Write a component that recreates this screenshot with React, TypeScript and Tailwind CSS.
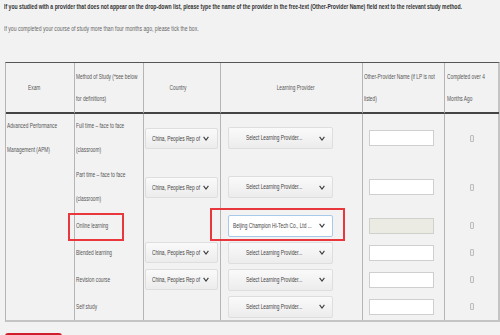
import React from "react";

const T = ({ children, c = "origin-left" }: { children: React.ReactNode; c?: string }) => (
  <span className={`inline-block whitespace-nowrap scale-x-[0.6] ${c}`}>{children}</span>
);

const P = ({ children }: { children: React.ReactNode }) => (
  <span className="inline-block origin-left scale-x-[0.64] whitespace-nowrap">{children}</span>
);

const Chevron = () => (
  <svg width="6" height="5" viewBox="0 0 6 5" className="shrink-0">
    <path d="M0.6 0.9 L3 4 L5.4 0.9" stroke="#3a3a3a" strokeWidth="1.1" fill="none" />
  </svg>
);

function CountrySel() {
  return (
    <div className="ml-px flex h-[21px] w-[73px] items-center rounded-[2px] border border-[#dedede] bg-gradient-to-b from-[#fafafa] to-[#ececec] pl-[6px] pr-[8px] text-[#444]">
      <div className="min-w-0 flex-1 leading-[19px]">
        <T>China, Peoples Rep of</T>
      </div>
      <Chevron />
    </div>
  );
}

function LPSel({ text = "Select Learning Provider...", focus = false }: { text?: string; focus?: boolean }) {
  return (
    <div
      className={
        focus
          ? "ml-[7px] flex h-[22px] w-[105px] items-center rounded-[2px] border border-[#a9c9ea] bg-white pl-[4px] pr-[7px] text-[#444]"
          : "ml-[7px] flex h-[22px] w-[105px] items-center rounded-[2px] border border-[#dedede] bg-gradient-to-b from-[#fafafa] to-[#ececec] pl-[17px] pr-[7px] text-[#444]"
      }
    >
      <div className="min-w-0 flex-1 leading-[20px]">
        <T>{text}</T>
      </div>
      <Chevron />
    </div>
  );
}

function Inp({ disabled = false }: { disabled?: boolean }) {
  return (
    <div
      className={
        disabled
          ? "ml-[6px] h-[16px] w-[65px] border border-[#d0d0cc] bg-[#ebebe4]"
          : "ml-[6px] h-[16px] w-[65px] border border-[#cfcfcf] bg-white"
      }
    />
  );
}

function Check() {
  return (
    <div className="flex h-full items-center justify-center">
      <div className="h-[7px] w-[4px] rounded-[1px] border border-[#bdbdbd] bg-[#ececec]" />
    </div>
  );
}

const cellR = "border-r border-[#b5b5b5]";

type Row = { method: string[]; country: boolean; lp: "sel" | "focus"; disabled?: boolean };

const rows: Row[] = [
  { method: ["Full time – face to face", "(classroom)"], country: true, lp: "sel" },
  { method: ["Part time – face to face", "(classroom)"], country: true, lp: "sel" },
  { method: ["Online learning"], country: false, lp: "focus", disabled: true },
  { method: ["Blended learning"], country: true, lp: "sel" },
  { method: ["Revision course"], country: true, lp: "sel" },
  { method: ["Self study"], country: false, lp: "sel" },
];

export default function App() {
  return (
    <div className="relative h-[335px] w-[500px] overflow-hidden bg-[#f2f2f2] font-['Liberation_Sans',Arial,sans-serif] text-[8px] text-[#555]">
      <div className="pl-[4px] leading-[14px] font-bold text-[#333]">
        <P>
          If you studied with a provider that does not appear on the drop-down list, please type the name of the provider in the free-text (Other-Provider Name) field next to the relevant study method.
        </P>
      </div>
      <div className="mt-[8px] pl-[4px] leading-[14px] text-[#666]">
        <P>If you completed your course of study more than four months ago, please tick the box.</P>
      </div>

      <div className="ml-[5px] mt-[26px] w-[495px] border-t border-l border-r-2 border-b-2 border-t-[#555] border-l-[#b5b5b5] border-r-[#c4c4c4] border-b-[#c4c4c4]">
        <div className="grid grid-cols-[69px_69px_77px_142px_82px_54px] grid-rows-[51px_48px_50px_27px_27px_27px_27px]">
          {/* header */}
          <div className={`${cellR} flex items-center justify-center border-b-2 border-b-[#444] pr-[12px]`}>
            <T c="origin-center">Exam</T>
          </div>
          <div className={`${cellR} flex flex-col justify-center border-b-2 border-b-[#444] pl-px leading-[22px]`}>
            <T>Method of Study (*see below</T>
            <T>for definitions)</T>
          </div>
          <div className={`${cellR} flex items-center justify-center border-b-2 border-b-[#444] pr-[8px]`}>
            <T c="origin-center">Country</T>
          </div>
          <div className={`${cellR} flex items-center justify-center border-b-2 border-b-[#444] pl-[8px]`}>
            <T c="origin-center">Learning Provider</T>
          </div>
          <div className={`${cellR} flex flex-col justify-center border-b-2 border-b-[#444] pl-px leading-[22px]`}>
            <T>Other-Provider Name (if LP is not</T>
            <T>listed)</T>
          </div>
          <div className="flex flex-col justify-center border-b-2 border-b-[#444] pl-[2px] leading-[22px]">
            <T>Completed over 4</T>
            <T>Months Ago</T>
          </div>

          {/* exam cell */}
          <div className={`${cellR} row-span-6 flex flex-col pl-px leading-[24px]`}>
            <T>Advanced Performance</T>
            <T>Management (APM)</T>
          </div>

          {rows.map((r, i) => (
            <React.Fragment key={i}>
              <div className={`${cellR} flex flex-col justify-center pl-px leading-[24px]`}>
                {r.method.map((m) => (
                  <T key={m}>{m}</T>
                ))}
              </div>
              <div className={`${cellR} flex items-center`}>{r.country ? <CountrySel /> : null}</div>
              <div className={`${cellR} flex items-center`}>
                {r.lp === "focus" ? <LPSel focus text="Beijing Champion Hi-Tech Co., Ltd ..." /> : <LPSel />}
              </div>
              <div className={`${cellR} flex items-center`}>
                <Inp disabled={r.disabled} />
              </div>
              <Check />
            </React.Fragment>
          ))}
        </div>
      </div>

      <div className="ml-[5px] mt-[11px] h-[10px] w-[57px] rounded-t-[3px] bg-[#cf1f2a]" />

      {/* highlight boxes */}
      <div className="pointer-events-none absolute left-[68px] top-[213px] h-[28px] w-[56px] border-2 border-[#e8383d]" />
      <div className="pointer-events-none absolute left-[210px] top-[208px] h-[33px] w-[135px] border-2 border-[#e8383d]" />
    </div>
  );
}
